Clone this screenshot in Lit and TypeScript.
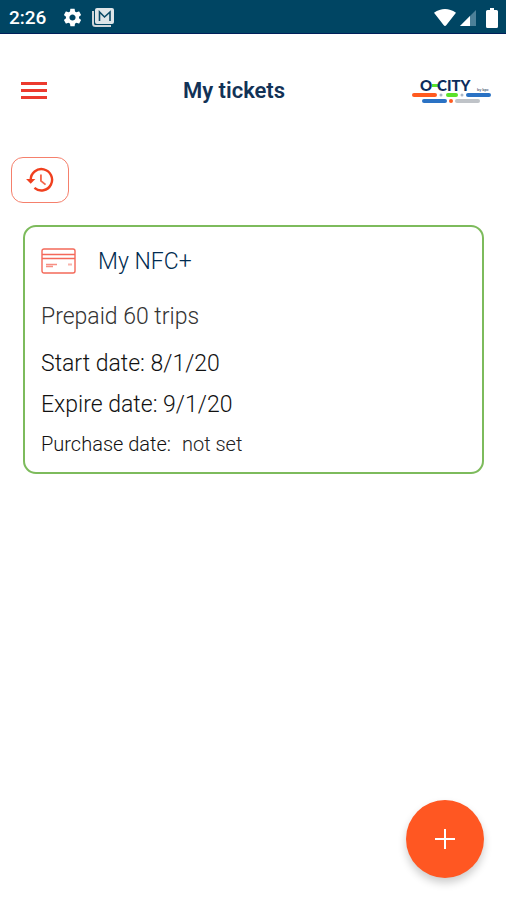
import { LitElement, html, svg, css } from "lit";
import { customElement, property } from "lit/decorators.js";

interface Ticket {
  name: string;
  product: string;
  start: string;
  expire: string;
  purchase: string;
}

@customElement("status-bar")
class StatusBar extends LitElement {
  static styles = css`
    :host {
      display: flex;
      align-items: center;
      justify-content: space-between;
      height: 34px;
      padding: 2px 8px 0 9px;
      box-sizing: border-box;
      background: #004563;
      border-bottom: 1px solid #00205a;
      color: #fff;
      font-size: 19px;
      font-weight: 500;
    }
    .group {
      display: flex;
      align-items: center;
    }
    .left {
      gap: 16px;
    }
    .notifications {
      gap: 9px;
    }
    svg {
      display: block;
    }
    .right {
      gap: 4px;
    }
    .battery {
      margin-left: 6px;
    }
  `;

  render() {
    return html`
      <div class="group left">
        <span>2:26</span>
        <div class="group notifications">
          <svg width="21" height="21" viewBox="0 0 24 24" fill="#fff" aria-hidden="true">
            <path
              d="M19.43 12.98c.04-.32.07-.64.07-.98s-.03-.66-.07-.98l2.11-1.65c.19-.15.24-.42.12-.64l-2-3.46c-.12-.22-.39-.3-.61-.22l-2.49 1c-.52-.4-1.08-.73-1.69-.98l-.38-2.65C14.46 2.18 14.25 2 14 2h-4c-.25 0-.46.18-.49.42l-.38 2.65c-.61.25-1.17.59-1.69.98l-2.49-1c-.23-.09-.49 0-.61.22l-2 3.46c-.13.22-.07.49.12.64l2.11 1.65c-.04.32-.07.65-.07.98s.03.66.07.98l-2.11 1.65c-.19.15-.24.42-.12.64l2 3.46c.12.22.39.3.61.22l2.49-1c.52.4 1.08.73 1.69.98l.38 2.65c.03.24.24.42.49.42h4c.25 0 .46-.18.49-.42l.38-2.65c.61-.25 1.17-.59 1.69-.98l2.49 1c.23.09.49 0 .61-.22l2-3.46c.12-.22.07-.49-.12-.64l-2.11-1.65zM12 15.5c-1.93 0-3.5-1.57-3.5-3.5s1.57-3.5 3.5-3.5 3.5 1.57 3.5 3.5-1.57 3.5-3.5 3.5z"
            />
          </svg>
          <svg width="22" height="19" viewBox="0 0 22 19" aria-hidden="true">
            <path d="M1 3v12.500Q1 18 3.500 18H19" fill="none" stroke="#cfd6da" stroke-width="2" />
            <rect x="3" y="0" width="19" height="16" rx="2" fill="#dfe5e8" />
            <path d="M7.500 13V4l5 5 5.500-5v9" fill="none" stroke="#0b4a66" stroke-width="1.600" />
          </svg>
        </div>
      </div>
      <div class="group right">
        <svg width="22" height="17" viewBox="0 0 23 18" preserveAspectRatio="none" fill="#fff" aria-hidden="true">
          <path d="M0 4Q11.500-4 23 4L13 17Q11.500 19 10 17z" />
        </svg>
        <svg width="16" height="16" viewBox="0 0 16 17" preserveAspectRatio="none" aria-hidden="true">
          <path d="M16 0v17H0z" fill="#4d8098" />
          <path d="M10 6.400V17H0z" fill="#fff" />
        </svg>
        <svg class="battery" width="12" height="20" viewBox="0 0 12 20" fill="#fff" aria-hidden="true">
          <path d="M4 0h4v2h2.500Q12 2 12 3.500v15Q12 20 10.500 20h-9Q0 20 0 18.500v-15Q0 2 1.500 2H4z" />
        </svg>
      </div>
    `;
  }
}

@customElement("city-logo")
class CityLogo extends LitElement {
  static styles = css`
    :host,
    svg {
      display: block;
    }
    .word {
      font: 900 15px Lato, sans-serif;
      fill: #0d2c5c;
    }
    .by {
      font: 700 4px Lato, sans-serif;
      fill: #55657d;
    }
  `;

  render() {
    const bars = [
      [0, 20, 25, 4, "#ff5a1f"],
      [34, 20, 12, 4, "#5be32a"],
      [54, 20, 25, 4, "#2a72c4"],
      [10, 26, 25, 4, "#2a72c4"],
      [43, 26, 25, 4, "#bfc3c8"],
    ];
    return html`
      <svg width="79" height="36" viewBox="0 0 79 36" role="img" aria-label="O-CITY">
        <rect x="20" y="11" width="6" height="3" fill="#5be32a" />
        <text class="word" x="8" y="18">O</text>
        <text class="word" x="25" y="18">CITY</text>
        <text class="by" x="65" y="18">by bpc</text>
        ${bars.map(
          ([x, y, w, h, c]) => svg`<rect x=${x} y=${y} width=${w} height=${h} rx="2" fill=${c} />`,
        )}
        <circle cx="29" cy="22" r="1.500" fill="#a9b6c6" />
        <circle cx="50" cy="22" r="1.500" fill="#a9b6c6" />
        <circle cx="39" cy="28" r="2" fill="#ff5a1f" />
      </svg>
    `;
  }
}

@customElement("ticket-card")
class TicketCard extends LitElement {
  @property({ attribute: false }) ticket!: Ticket;

  static styles = css`
    :host {
      display: block;
      box-sizing: border-box;
      padding: 16px 16px 8px;
      border: 2px solid #7dbb5c;
      border-radius: 13px;
      color: #111;
      font-size: 23px;
      font-weight: 300;
    }
    .head {
      display: flex;
      align-items: center;
      gap: 22px;
      height: 36px;
    }
    svg {
      display: block;
    }
    h2 {
      margin: 0;
      font-size: 23px;
      font-weight: 300;
      color: #002b50;
    }
    p {
      margin: 0;
      line-height: 41px;
    }
    .product {
      margin-top: 17px;
      margin-bottom: 6px;
      color: #333;
    }
    .purchase {
      font-size: 20px;
      line-height: 39px;
    }
    .value {
      margin-left: 6px;
      color: #222;
    }
  `;

  render() {
    const t = this.ticket;
    return html`
      <div class="head">
        <svg width="35" height="26" viewBox="0 0 35 26" fill="none" stroke="#f4695a" aria-hidden="true">
          <rect x="1" y="1" width="33" height="24" rx="2" stroke-width="1.400" />
          <path d="M1 6.500h33M1 10.500h33" stroke-width="1.600" />
          <path d="M5 16.500h11M5 18.500h7" stroke-width="1.300" stroke-opacity=".75" />
          <path d="M27 16.500h4" stroke-width="2" stroke-opacity=".5" />
        </svg>
        <h2>${t.name}</h2>
      </div>
      <p class="product">${t.product}</p>
      <p>Start date: ${t.start}</p>
      <p>Expire date: ${t.expire}</p>
      <p class="purchase">Purchase date: <span class="value">${t.purchase}</span></p>
    `;
  }
}

@customElement("app-root")
class AppRoot extends LitElement {
  static styles = css`
    :host {
      display: flex;
      flex-direction: column;
      min-height: 100vh;
      background: #fff;
      font-family: Roboto, sans-serif;
    }
    header {
      display: flex;
      align-items: center;
      justify-content: space-between;
      padding: 35px 15px 0 12px;
    }
    h1 {
      margin: 0;
      font-size: 22px;
      font-weight: 600;
      line-height: 44px;
      color: #123256;
    }
    button {
      display: grid;
      place-items: center;
      padding: 0;
      border: 0;
      background: none;
      cursor: pointer;
    }
    svg {
      display: block;
    }
    .menu {
      width: 44px;
      height: 44px;
    }
    main {
      flex: 1;
      padding: 44px 22px 0 11px;
    }
    .history {
      width: 58px;
      height: 46px;
      border: 1px solid #f5806c;
      border-radius: 12px;
    }
    ticket-card {
      margin: 22px 0 0 12px;
    }
    footer {
      display: flex;
      justify-content: flex-end;
      padding: 0 22px 22px;
    }
    .add {
      width: 78px;
      height: 78px;
      border-radius: 50%;
      background: #ff5722;
      box-shadow: 0 5px 9px rgba(0, 0, 0, 0.2);
    }
  `;

  private tickets: Ticket[] = [
    {
      name: "My NFC+",
      product: "Prepaid 60 trips",
      start: "8/1/20",
      expire: "9/1/20",
      purchase: "not set",
    },
  ];

  render() {
    return html`
      <status-bar></status-bar>
      <header>
        <button class="menu" aria-label="Menu">
          <svg width="26" height="18" viewBox="0 0 26 18" fill="#ec3a2e">
            <path d="M0 0h26v3H0zM0 7h26v3H0zM0 14h26v3H0z" />
          </svg>
        </button>
        <h1>My tickets</h1>
        <city-logo></city-logo>
      </header>
      <main>
        <button class="history" aria-label="Ticket history">
          <svg width="28" height="26" viewBox="0 0 30 28" fill="none" stroke="#f0401f" stroke-width="2.600">
            <path d="M5 14A11.500 11.500 0 1 1 9 22.500" />
            <path d="M0 13h10l-5 5z" fill="#f0401f" stroke="none" />
            <path d="M16 8v7l5 4" stroke-width="2" stroke="#f4674c" />
          </svg>
        </button>
        ${this.tickets.map((t) => html`<ticket-card .ticket=${t}></ticket-card>`)}
      </main>
      <footer>
        <button class="add" aria-label="Add ticket">
          <svg width="22" height="22" viewBox="0 0 22 22" fill="#fff">
            <path d="M10 1h2v9h9v2h-9v9h-2v-9H1v-2h9z" />
          </svg>
        </button>
      </footer>
    `;
  }
}
